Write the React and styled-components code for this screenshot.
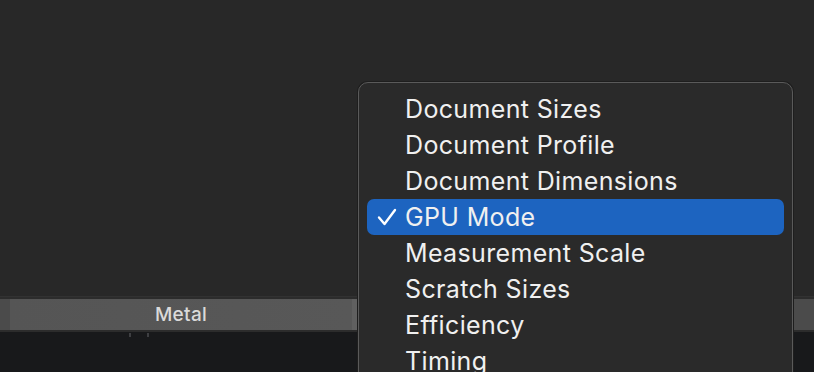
import React from "react";
import styled, { createGlobalStyle } from "styled-components";

const Global = createGlobalStyle`
  html, body { margin: 0; padding: 0; background: #282828; }
  body { font-family: Inter, "Noto Sans", sans-serif; }
`;

const Page = styled.div`
  position: relative;
  width: 814px;
  height: 372px;
  overflow: hidden;
  display: flex;
  flex-direction: column;
  background: #282828;
`;

const Canvas = styled.div`
  height: 296px;
  background: #282828;
`;

const Bar = styled.div`
  height: 36px;
  display: flex;
  background: #2c2c2c;
  border-top: 1px solid #323232;
  box-sizing: border-box;
  padding: 2px 0 2px 0;
`;

const Segment = styled.div`
  flex: ${(p) => (p.$grow ? 1 : "none")};
  width: ${(p) => (p.$w ? `${p.$w}px` : "auto")};
  background: ${(p) => (p.$active ? "linear-gradient(90deg,#555 0%,#585858 100%)" : "#4b4b4b")};
  border-right: ${(p) => (p.$active ? "5px solid #606060" : "none")};
  display: flex;
  align-items: center;
  justify-content: center;
  color: #dadada;
  font-size: 19px;
  font-weight: 500;
  letter-spacing: 0.3px;
`;

const Divider = styled.div`
  width: 6px;
  background: #2a2a2a;
`;

const Bottom = styled.div`
  flex: 1;
  background: #18191b;
  position: relative;
`;

const Tick = styled.div`
  position: absolute;
  top: 1px;
  left: ${(p) => p.$x}px;
  width: 2px;
  height: 4px;
  background: #3e3f42;
`;

const Menu = styled.div`
  position: absolute;
  left: 358px;
  top: 82px;
  width: 435px;
  height: 320px;
  box-sizing: border-box;
  background: #2a2a2a;
  border: 1.5px solid #5a5a5a;
  border-radius: 10px;
  padding: 8px 8px;
  box-shadow: 0 0 0 1px #1e1e1e;
`;

const Item = styled.div`
  height: 36px;
  display: flex;
  align-items: center;
  padding-left: 10px;
  border-radius: 7px;
  background: ${(p) => (p.$selected ? "#1d64c0" : "transparent")};
  color: #f0f0f0;
  font-size: 25px;
  letter-spacing: 0.35px;
`;

const Check = styled.span`
  width: 28px;
  display: inline-flex;
  align-items: center;
`;

const items = [
  "Document Sizes",
  "Document Profile",
  "Document Dimensions",
  "GPU Mode",
  "Measurement Scale",
  "Scratch Sizes",
  "Efficiency",
  "Timing",
];

export default function App() {
  return (
    <>
      <Global />
      <Page>
        <Canvas />
        <Bar>
          <Segment $w={10} />
          <Segment $w={342} $active>Metal</Segment>
          <Divider />
          <Segment $grow />
        </Bar>
        <Bottom>
          <Tick $x={129} />
          <Tick $x={147} />
        </Bottom>
        <Menu>
          {items.map((t) => (
            <Item key={t} $selected={t === "GPU Mode"}>
              <Check>
                {t === "GPU Mode" && (
                  <svg width="20" height="18" viewBox="0 0 20 18">
                    <path d="M2 9.5 L7.5 16 L18 2" fill="none" stroke="#fff" strokeWidth="2.4" strokeLinecap="round" strokeLinejoin="round" />
                  </svg>
                )}
              </Check>
              {t}
            </Item>
          ))}
        </Menu>
      </Page>
    </>
  );
}
